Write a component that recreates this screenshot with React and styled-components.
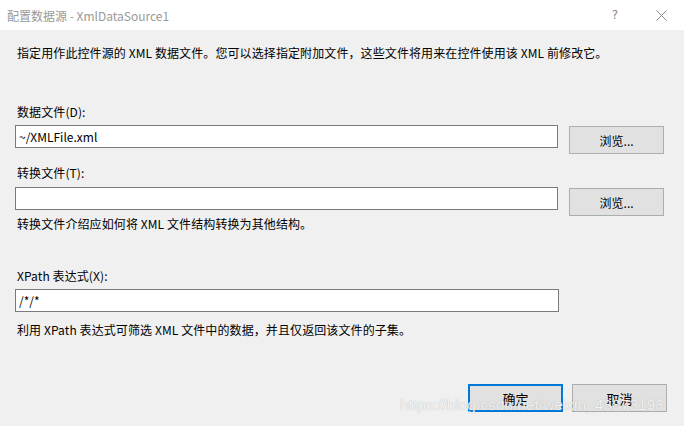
import React from 'react';
import styled, { createGlobalStyle } from 'styled-components';

const Global = createGlobalStyle`
  html, body { margin: 0; padding: 0; background: #f0f0f0; }
  body {
    font-family: "Noto Sans CJK SC", "Noto Sans", sans-serif;
    font-size: 12px;
    color: #000;
  }
`;

const Dialog = styled.div`
  position: relative;
  width: 684px;
  height: 426px;
  display: flex;
  flex-direction: column;
  background: #f0f0f0;
  overflow: hidden;
`;

const TitleBar = styled.div`
  height: 30px;
  background: #fff;
  display: flex;
  align-items: center;
  padding-left: 7px;
  color: #999;
  font-size: 12px;
`;

const Title = styled.div`
  flex: 1;
`;

const TitleButton = styled.div`
  width: 46px;
  height: 30px;
  display: flex;
  align-items: center;
  justify-content: center;
  color: #8a8a8a;
  font-family: "DejaVu Sans", sans-serif;
  font-size: 12px;
`;

const Body = styled.div`
  flex: 1;
  display: flex;
  flex-direction: column;
  padding: 15px 20px 0 15px;
`;

const Text = styled.div`
  line-height: 16px;
  padding-left: 2px;
  margin-top: ${p => p.top || 0}px;
  white-space: nowrap;
  letter-spacing: 0.1px;
`;

const Row = styled.div`
  display: flex;
  align-items: flex-start;
  margin-top: ${p => p.top || 0}px;
`;

const Input = styled.input`
  box-sizing: border-box;
  width: 544px;
  height: 23px;
  border: 1px solid #7a7a7a;
  background: #fff;
  padding: 0 3px;
  margin: 0;
  font: inherit;
  font-size: 12px;
  color: #000;
  outline: none;
`;

const Button = styled.button`
  box-sizing: border-box;
  width: 95px;
  height: 28px;
  margin: ${p => p.offset || 0}px 0 0 ${p => p.gap || 0}px;
  background: #e1e1e1;
  border: ${p => p.primary ? '2px solid #0078d7' : '1px solid #adadad'};
  font: inherit;
  font-size: ${p => p.large ? 13 : 12}px;
  color: #000;
  padding: 0;
`;

const Footer = styled.div`
  display: flex;
  justify-content: flex-end;
  gap: 9px;
  margin-top: 46px;
  margin-right: -3px;
`;

const Watermark = styled.div`
  position: absolute;
  left: 400px;
  top: 396px;
  font-family: "Liberation Sans", Arial, sans-serif;
  font-size: 15.5px;
  color: rgba(255, 255, 255, 0.85);
  text-shadow: 0 0 1px rgba(120, 120, 120, 0.6);
  pointer-events: none;
  white-space: nowrap;
`;

function CloseIcon() {
  return (
    <svg width="11" height="11" viewBox="0 0 11 11">
      <path d="M0.5 0.5 L10.5 10.5 M10.5 0.5 L0.5 10.5" stroke="#8a8a8a" strokeWidth="1" fill="none" />
    </svg>
  );
}

export default function App() {
  return (
    <Dialog>
      <Global />
      <TitleBar>
        <Title>配置数据源 - XmlDataSource1</Title>
        <TitleButton>?</TitleButton>
        <TitleButton><CloseIcon /></TitleButton>
      </TitleBar>
      <Body>
        <Text>指定用作此控件源的 XML 数据文件。您可以选择指定附加文件，这些文件将用来在控件使用该 XML 前修改它。</Text>

        <Text top={43}>数据文件(D):</Text>
        <Row top={5}>
          <Input defaultValue="~/XMLFile.xml" />
          <Button gap={11} offset={1}>浏览...</Button>
        </Row>

        <Text top={11}>转换文件(T):</Text>
        <Row top={6}>
          <Input defaultValue="" />
          <Button gap={11} offset={1}>浏览...</Button>
        </Row>
        <Text>转换文件介绍应如何将 XML 文件结构转换为其他结构。</Text>

        <Text top={36}>XPath 表达式(X):</Text>
        <Row top={5}>
          <Input defaultValue="/*/*" />
        </Row>
        <Text top={10}>利用 XPath 表达式可筛选 XML 文件中的数据，并且仅返回该文件的子集。</Text>

        <Footer>
          <Button primary large>确定</Button>
          <Button large>取消</Button>
        </Footer>
      </Body>
      <Watermark>https://blog.csdn.net/weixin_43873193</Watermark>
    </Dialog>
  );
}
